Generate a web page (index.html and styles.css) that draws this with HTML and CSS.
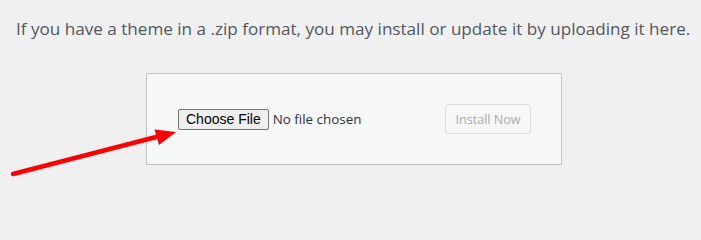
FILE: index.html
```html
<!DOCTYPE html>
<html lang="en">
<head>
<meta charset="utf-8">
<title>Upload Theme</title>
<link rel="stylesheet" href="styles.css">
</head>
<body>
<div class="page">
  <p class="install-help">If you have a theme in a .zip format, you may install or update it by uploading it here.</p>
  <form class="upload-form">
    <div class="file-field">
      <span class="choose-btn">Choose File</span>
      <span class="file-name">No file chosen</span>
    </div>
    <span class="install-btn">Install Now</span>
  </form>
  <svg class="arrow" width="701" height="205" viewBox="0 0 701 205">
    <line x1="13" y1="174" x2="160" y2="136" stroke="#ff0000" stroke-width="4.5" stroke-linecap="round"/>
    <polygon points="176,132 154.5,129.5 159,145" fill="#ff0000"/>
  </svg>
</div>
</body>
</html>
```
FILE: styles.css
```css
html, body {
  margin: 0;
  padding: 0;
  background: #f0f0f1;
}
.page {
  position: relative;
  width: 701px;
  height: 205px;
  overflow: hidden;
  font-family: "Open Sans", "Noto Sans", sans-serif;
}
.install-help {
  margin: 0;
  padding: 18px 0 0 16px;
  font-size: 17.1px;
  line-height: 22px;
  color: #50575e;
  white-space: nowrap;
}
.upload-form {
  box-sizing: border-box;
  margin: 33px 0 0 146px;
  width: 416px;
  height: 92px;
  padding: 0 30px 0 31px;
  background: #f6f7f7;
  border: 1px solid #c3c4c7;
  display: flex;
  align-items: center;
  justify-content: space-between;
}
.file-field {
  display: flex;
  align-items: center;
  gap: 4px;
}
.choose-btn {
  box-sizing: border-box;
  height: 21px;
  padding: 0 7px;
  display: flex;
  align-items: center;
  font-family: "Liberation Sans", Arial, sans-serif;
  font-size: 14px;
  color: #000;
  background: #efefef;
  border: 1px solid #767676;
  border-radius: 2px;
}
.file-name {
  font-size: 13.4px;
  color: #2c3338;
}
.install-btn {
  box-sizing: border-box;
  height: 30px;
  width: 86px;
  display: flex;
  align-items: center;
  justify-content: center;
  font-size: 12.6px;
  color: #a7aaad;
  background: #f6f7f7;
  border: 1px solid #dcdcde;
  border-radius: 3px;
}
.arrow {
  position: absolute;
  left: 0;
  top: 0;
  pointer-events: none;
}
```
